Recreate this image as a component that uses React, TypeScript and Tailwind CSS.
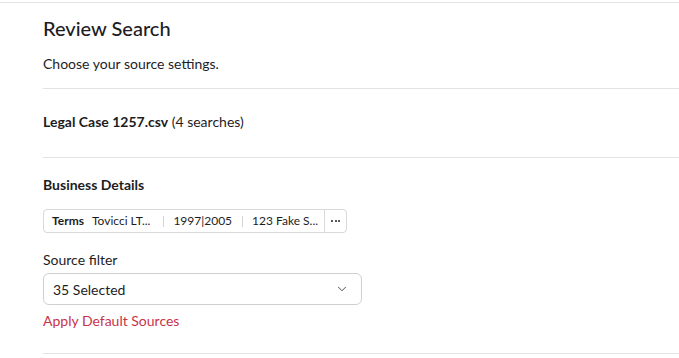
import React from 'react';
import { ChevronDown } from 'lucide-react';

const terms = ['Tovicci LT...', '1997|2005', '123 Fake S...'];

const App: React.FC = () => {
    return (
        <div className="w-[679px] h-[358px] bg-white overflow-hidden text-[#1d1d1f]" style={{ fontFamily: 'Lato, "Open Sans", sans-serif' }}>
            <div className="mt-[2px] border-t border-[#e3e3e3]" />
            <div className="ml-[43px]">
                <div className="pr-6">
                    <h1 className="mt-[11px] text-[20px] leading-[28px] font-medium">Review Search</h1>
                    <p className="mt-[12px] text-[14px] leading-[20px]">Choose your source settings.</p>
                </div>

                <div className="mt-[14px] border-t border-[#e3e3e3]" />

                <p className="mt-[23px] text-[14px] leading-[20px]">
                    <span className="font-bold">Legal Case 1257.csv</span> (4 searches)
                </p>

                <div className="mt-[25px] border-t border-[#e3e3e3]" />

                <h2 className="mt-[17px] text-[14px] leading-[20px] font-bold">Business Details</h2>

                <div className="mt-[14px] flex items-stretch w-[304px] h-[24px] border border-[#d9d9d9] rounded text-[12px]">
                    <div className="flex-1 flex items-center pl-[8px] gap-[8px]">
                        <span className="font-bold">Terms</span>
                        {terms.map((t, i) => (
                            <React.Fragment key={t}>
                                {i > 0 && <span className="w-px h-[11px] bg-[#d4d4d4] mx-[1px]" />}
                                <span className={i === 0 ? 'mr-[4px]' : 'mr-[1px]'}>{t}</span>
                            </React.Fragment>
                        ))}
                    </div>
                    <button className="w-[22px] border-l border-[#d9d9d9] flex items-center justify-center gap-[1.5px]">
                        <span className="w-[2px] h-[2px] rounded-full bg-[#222]" />
                        <span className="w-[2px] h-[2px] rounded-full bg-[#222]" />
                        <span className="w-[2px] h-[2px] rounded-full bg-[#222]" />
                    </button>
                </div>

                <p className="mt-[17px] text-[14px] leading-[20px]">Source filter</p>

                <div className="mt-[3px] w-[319px] h-[32px] border border-[#cfcfcf] rounded-md flex items-center justify-between pl-[9px] pr-[12px] text-[14px]">
                    <span>35 Selected</span>
                    <ChevronDown className="w-[14px] h-[14px] text-[#333]" strokeWidth={1.5} />
                </div>

                <p className="mt-[6px] text-[14px] leading-[20px] text-[#c8334a]">Apply Default Sources</p>

                <div className="mt-[22px] border-t border-[#e3e3e3]" />
            </div>
        </div>
    );
};

export default App;
